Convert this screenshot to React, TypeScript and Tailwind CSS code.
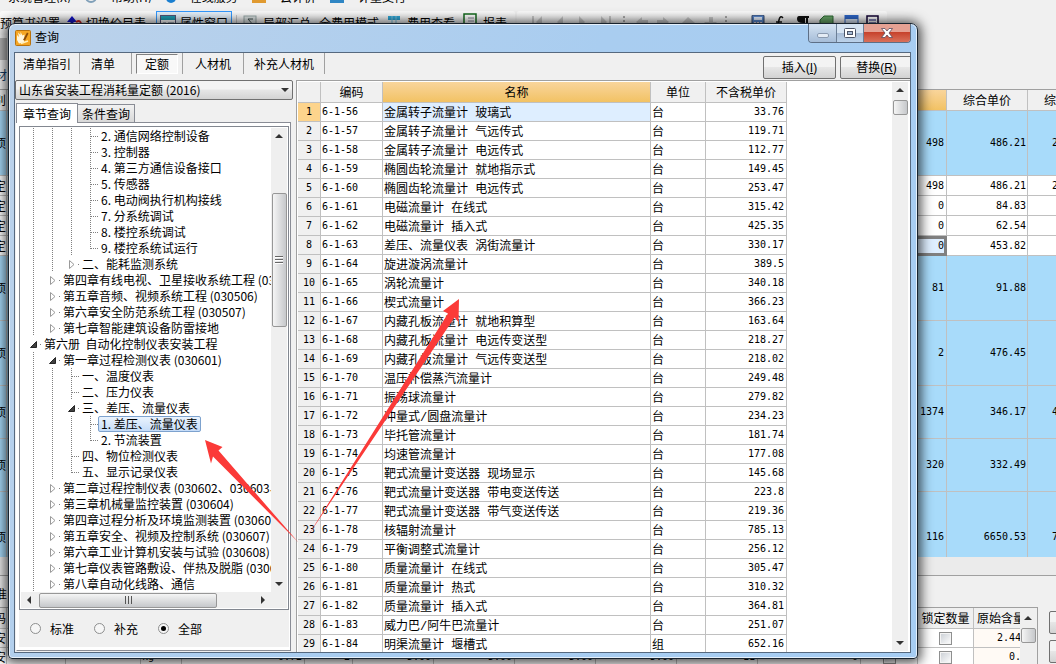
import { ReactNode } from 'react';
import clsx from 'clsx';

type Guide = '|' | 'T' | 'L' | '>' | 'v';

interface TreeNode {
  guides: Guide[];
  label: string;
  selected?: boolean;
}

const node = (guides: string, label: string, selected = false): TreeNode => ({
  guides: guides.split('') as Guide[],
  label,
  selected,
});

const treeNodes: TreeNode[] = [
  node('|||T', '2. 通信网络控制设备'),
  node('|||T', '3. 控制器'),
  node('|||T', '4. 第三方通信设备接口'),
  node('|||T', '5. 传感器'),
  node('|||T', '6. 电动阀执行机构接线'),
  node('|||T', '7. 分系统调试'),
  node('|||T', '8. 楼控系统调试'),
  node('|||L', '9. 楼控系统试运行'),
  node('||>', '二、能耗监测系统'),
  node('|>', '第四章有线电视、卫星接收系统工程 (030505)'),
  node('|>', '第五章音频、视频系统工程 (030506)'),
  node('|>', '第六章安全防范系统工程 (030507)'),
  node('|>', '第七章智能建筑设备防雷接地'),
  node('v', '第六册  自动化控制仪表安装工程'),
  node('|v', '第一章过程检测仪表 (030601)'),
  node('||T', '一、温度仪表'),
  node('||T', '二、压力仪表'),
  node('||v', '三、差压、流量仪表'),
  node('|||T', '1. 差压、流量仪表', true),
  node('|||L', '2. 节流装置'),
  node('||T', '四、物位检测仪表'),
  node('||L', '五、显示记录仪表'),
  node('|>', '第二章过程控制仪表 (030602、030603、030605)'),
  node('|>', '第三章机械量监控装置 (030604)'),
  node('|>', '第四章过程分析及环境监测装置 (030605)'),
  node('|>', '第五章安全、视频及控制系统 (030607)'),
  node('|>', '第六章工业计算机安装与试验 (030608)'),
  node('|>', '第七章仪表管路敷设、伴热及脱脂 (030609)'),
  node('|>', '第八章自动化线路、通信'),
];

const quotas: [string, string, string, string][] = [
  ['6-1-56', '金属转子流量计 玻璃式', '台', '33.76'],
  ['6-1-57', '金属转子流量计 气远传式', '台', '119.71'],
  ['6-1-58', '金属转子流量计 电远传式', '台', '112.77'],
  ['6-1-59', '椭圆齿轮流量计 就地指示式', '台', '149.45'],
  ['6-1-60', '椭圆齿轮流量计 电远传式', '台', '253.47'],
  ['6-1-61', '电磁流量计 在线式', '台', '315.42'],
  ['6-1-62', '电磁流量计 插入式', '台', '425.35'],
  ['6-1-63', '差压、流量仪表 涡街流量计', '台', '330.17'],
  ['6-1-64', '旋进漩涡流量计', '台', '389.5'],
  ['6-1-65', '涡轮流量计', '台', '340.18'],
  ['6-1-66', '楔式流量计', '台', '366.23'],
  ['6-1-67', '内藏孔板流量计 就地积算型', '台', '163.64'],
  ['6-1-68', '内藏孔板流量计 电远传变送型', '台', '218.27'],
  ['6-1-69', '内藏孔板流量计 气远传变送型', '台', '218.02'],
  ['6-1-70', '温压补偿蒸汽流量计', '台', '249.48'],
  ['6-1-71', '振荡球流量计', '台', '279.82'],
  ['6-1-72', '冲量式/圆盘流量计', '台', '234.23'],
  ['6-1-73', '毕托管流量计', '台', '181.74'],
  ['6-1-74', '均速管流量计', '台', '177.08'],
  ['6-1-75', '靶式流量计变送器 现场显示', '台', '145.68'],
  ['6-1-76', '靶式流量计变送器 带电变送传送', '台', '223.8'],
  ['6-1-77', '靶式流量计变送器 带气变送传送', '台', '219.36'],
  ['6-1-78', '核辐射流量计', '台', '785.13'],
  ['6-1-79', '平衡调整式流量计', '台', '256.12'],
  ['6-1-80', '质量流量计 在线式', '台', '305.47'],
  ['6-1-81', '质量流量计 热式', '台', '310.32'],
  ['6-1-82', '质量流量计 插入式', '台', '364.81'],
  ['6-1-83', '威力巴/阿牛巴流量计', '台', '251.07'],
  ['6-1-84', '明渠流量计 堰槽式', '组', '652.16'],
];

interface BillRow {
  kind: string;
  qty: string;
  price: string;
  total: string;
  height: string;
  item?: boolean;
  active?: boolean;
}

const billRows: BillRow[] = [
  { kind: '项', qty: '498', price: '486.21', total: '242132.58', height: 'h-[65px]', item: true },
  { kind: '定', qty: '498', price: '486.21', total: '242132.58', height: 'h-5' },
  { kind: '定', qty: '0', price: '84.83', total: '', height: 'h-5' },
  { kind: '定', qty: '0', price: '62.54', total: '', height: 'h-5' },
  { kind: '定', qty: '0', price: '453.82', total: '', height: 'h-5', active: true },
  { kind: '项', qty: '81', price: '91.88', total: '', height: 'h-[65px]', item: true },
  { kind: '项', qty: '2', price: '476.45', total: '', height: 'h-[65px]', item: true },
  { kind: '项', qty: '1374', price: '346.17', total: '475637.58', height: 'h-[53px]', item: true },
  { kind: '项', qty: '320', price: '332.49', total: '', height: 'h-[53px]', item: true },
  { kind: '项', qty: '116', price: '6650.53', total: '771461.48', height: 'h-[90px]', item: true },
];

const glossy = 'bg-linear-to-b from-[#f3f3f3] from-45% via-[#e6e6e6] via-50% to-[#d3d3d3]';
const digits = "font-['DejaVu_Sans_Mono',monospace] text-[10px]";

function Triangle({ dir, className }: { dir: 'up' | 'down' | 'left' | 'right'; className?: string }) {
  const points = {
    up: '0,6 4,2 8,6',
    down: '0,2 8,2 4,6',
    left: '6,0 2,4 6,8',
    right: '2,0 6,4 2,8',
  };
  return (
    <svg viewBox="0 0 8 8" className={clsx('size-2 shrink-0', className)}>
      <polygon points={points[dir]} fill="#333" />
    </svg>
  );
}

function GuideCell({ guide }: { guide: Guide }) {
  return (
    <span className="flex h-4 w-[19px] shrink-0 items-center">
      <svg viewBox="0 0 19 16" className="h-4 w-[19px]" shapeRendering="crispEdges">
        {(guide === '|' || guide === 'T') && (
          <path d="M9.5 0V16" stroke="#808080" strokeDasharray="1 1" />
        )}
        {guide === 'L' && <path d="M9.5 0V9" stroke="#808080" strokeDasharray="1 1" />}
        {(guide === 'T' || guide === 'L') && (
          <path d="M10 8.5H18" stroke="#808080" strokeDasharray="1 1" />
        )}
        {guide === '>' && (
          <g shapeRendering="auto">
            <path d="M7.5 4.5V12.5L12 8.5Z" fill="#fff" stroke="#9a9a9a" />
            <path d="M16 8.5H17" stroke="#808080" />
          </g>
        )}
        {guide === 'v' && (
          <g shapeRendering="auto">
            <path d="M12.5 5.5V11.5H6.5Z" fill="#404040" stroke="#262626" />
            <path d="M16 8.5H17" stroke="#808080" />
          </g>
        )}
      </svg>
    </span>
  );
}

function ChapterTree() {
  return (
    <div className="flex min-h-0 flex-1 flex-col border border-[#828790] bg-white p-px">
      <div className="flex min-h-0 flex-1">
        <ul role="tree" className="min-w-0 flex-1 overflow-hidden pl-[3px]">
          {treeNodes.map((item, i) => (
            <li key={i} role="treeitem" aria-selected={item.selected} className="flex h-4 items-center">
              {item.guides.map((guide, g) => (
                <GuideCell key={g} guide={guide} />
              ))}
              <span
                className={clsx(
                  'h-4 whitespace-pre',
                  item.selected
                    ? '-ml-0.5 rounded-xs border border-[#7da2ce] bg-linear-to-b from-[#eaf3fd] to-[#c5dcf8] px-0.5 leading-[14px]'
                    : 'pl-px leading-4',
                )}
              >
                {item.label}
              </span>
            </li>
          ))}
        </ul>
        <div className="flex w-4 shrink-0 flex-col items-center bg-[#efefef] py-1">
          <Triangle dir="up" />
          <div className="mt-[53px] flex h-[134px] w-[15px] shrink-0 flex-col items-center justify-center gap-px rounded-xs border border-[#979797] bg-linear-to-r from-[#f5f5f5] to-[#c6c8cb]">
            <i className="h-0.5 w-2 border-b border-white bg-[#666]" />
            <i className="h-0.5 w-2 border-b border-white bg-[#666]" />
            <i className="h-0.5 w-2 border-b border-white bg-[#666]" />
          </div>
          <Triangle dir="down" className="mt-auto" />
        </div>
      </div>
      <div className="flex h-4 items-center bg-[#efefef] pl-1">
        <Triangle dir="left" />
        <div className="ml-1.5 flex h-[15px] w-[178px] items-center justify-center gap-0.5 rounded-xs border border-[#979797] bg-linear-to-b from-[#f5f5f5] to-[#c6c8cb]">
          <i className="h-2 w-px bg-[#555]" />
          <i className="h-2 w-px bg-[#555]" />
          <i className="h-2 w-px bg-[#555]" />
        </div>
        <Triangle dir="right" className="ml-auto mr-5" />
      </div>
    </div>
  );
}

function QuotaTable() {
  const head = 'border-b border-r border-[#c0c0c0] bg-[#f0f0f0] font-normal';
  const cell = 'border-b border-r border-[#c0c0c0]';
  return (
    <table className="w-[489px] table-fixed border-separate border-spacing-0 leading-none">
      <colgroup>
        <col className="w-[23px]" />
        <col className="w-[62px]" />
        <col className="w-[268px]" />
        <col className="w-[55px]" />
        <col className="w-[81px]" />
      </colgroup>
      <thead>
        <tr className="h-[21px]">
          <th className={head} />
          <th className={head}>编码</th>
          <th className="border-b border-r border-[#c0c0c0] bg-linear-to-b from-[#f9d59b] to-[#f2c263] font-normal">
            名称
          </th>
          <th className={head}>单位</th>
          <th className={head}>不含税单价</th>
        </tr>
      </thead>
      <tbody>
        {quotas.map(([code, name, unit, price], i) => (
          <tr key={code} className="h-[19px]">
            <td className={clsx(cell, digits, 'text-center', i === 0 ? 'bg-[#fdd48c]' : 'bg-[#f0f0f0]')}>
              {i + 1}
            </td>
            <td className={clsx(cell, digits, 'pl-px')}>{code}</td>
            <td
              className={clsx(
                cell,
                "whitespace-nowrap pl-px pt-[3px] font-['Liberation_Mono','Noto_Sans_CJK_SC',monospace]",
                i === 0 && 'bg-[#deeeff]',
              )}
            >
              {name}
            </td>
            <td className={clsx(cell, 'pl-px')}>{unit}</td>
            <td className={clsx(cell, digits, 'pr-0.5 text-right')}>{price}</td>
          </tr>
        ))}
      </tbody>
    </table>
  );
}

function ToolTab({ children, active }: { children: ReactNode; active?: boolean }) {
  return (
    <div className="flex h-[21px] items-center border-r border-[#a0a0a0] px-1">
      <button
        className={clsx(
          'h-5 whitespace-nowrap',
          active
            ? 'border border-white border-l-[#808080] border-t-[#808080] bg-[#f8f8f8] px-2 pt-px'
            : 'px-1',
        )}
      >
        {children}
      </button>
    </div>
  );
}

function TitleBar() {
  return (
    <div className="flex h-7 shrink-0 items-start pl-px">
      <svg viewBox="0 0 16 16" className="mt-1.5 size-4">
        <rect x=".5" y=".5" width="15" height="15" rx="1" fill="#f5a623" stroke="#b8720f" />
        <path d="M2 5 4 7 3 2.500 5.500 5 5.500 2 7.500 5.500 9.500 4.500 9 12.500 4 13.500 2 10Z" fill="#fff6dc" />
        <path d="M8 10 12 2.500 13.500 3.500 10 10.500Z" fill="#8a4b08" />
        <path d="M6 13.500 13 11" stroke="#fff0c0" strokeWidth="1.500" />
      </svg>
      <h1 className="ml-1 mt-[5px] leading-4">查询</h1>
      <div className="ml-auto flex h-[19px] overflow-hidden rounded-b border border-t-0 border-[#5d6f86]">
        <button
          aria-label="最小化"
          className="flex w-7 items-end justify-center border-r border-[#6c7f96] bg-linear-to-b from-[#d5e3f2] to-[#a6bdd8] pb-1"
        >
          <span className="h-[5px] w-3 rounded-xs border border-[#8b9bb0] bg-[#e4ecf5]" />
        </button>
        <button
          aria-label="最大化"
          className="flex w-[27px] items-center justify-center border-r border-[#6c7f96] bg-linear-to-b from-[#d5e3f2] from-50% via-[#a7bcd6] via-50% to-[#bcd2ea]"
        >
          <svg viewBox="0 0 12 10" className="h-2.5 w-3">
            <rect x=".5" y=".5" width="11" height="9" rx="1" fill="#fff" stroke="#4c5568" />
            <rect x="3.5" y="3.5" width="5" height="3" fill="#a7bcd6" stroke="#4c5568" />
          </svg>
        </button>
        <button
          aria-label="关闭"
          className="flex w-[46px] items-center justify-center bg-linear-to-b from-[#e5a193] from-45% via-[#c6402a] via-45% to-[#d9705a]"
        >
          <svg viewBox="0 0 12 10" className="h-2.5 w-3">
            <path
              d="M.5.5H4L6 3 8 .5H11.5L8 5 11.5 9.5H8L6 7 4 9.5H.5L4 5Z"
              fill="#fff"
              stroke="#5a4a5c"
              strokeWidth=".8"
            />
          </svg>
        </button>
      </div>
    </div>
  );
}

function ActionButton({ label, accessKey }: { label: string; accessKey: string }) {
  return (
    <button
      accessKey={accessKey}
      className={clsx('h-[23px] w-[73px] shrink-0 rounded-xs border border-[#707070]', glossy)}
    >
      {label}
      <span className="font-['Liberation_Sans',sans-serif]">
        (<u>{accessKey}</u>)
      </span>
    </button>
  );
}

function QueryDialog() {
  return (
    <section
      aria-label="查询"
      className="absolute bottom-[5px] left-2 right-[138px] top-[23px] flex flex-col rounded-t-[7px] rounded-b-sm border border-[#18232e] bg-linear-115 from-[#bcd2ea] via-[#a9cdf0] to-[#a6cdf3] pb-[5px] pl-[5px] pr-1.5 shadow-[0_1px_12px_3px_rgba(0,0,0,0.7),inset_0_0_0_1px_rgba(255,255,255,0.7)]"
    >
      <TitleBar />
      <div className="flex min-h-0 flex-1 flex-col overflow-hidden border border-[#56697f] bg-[#f0f0f0]">
        <div className="flex h-[27px] shrink-0">
          <ToolTab>清单指引</ToolTab>
          <ToolTab>
            <span className="pl-[3px] pr-2">清单</span>
          </ToolTab>
          <ToolTab active>定额</ToolTab>
          <ToolTab>
            <span className="px-1">人材机</span>
          </ToolTab>
          <ToolTab>
            <span className="px-0.5">补充人材机</span>
          </ToolTab>
          <div className="-mr-[3px] ml-auto flex gap-1 pt-[3px]">
            <ActionButton label="插入" accessKey="I" />
            <ActionButton label="替换" accessKey="R" />
          </div>
        </div>

        <div className="flex min-h-0 flex-1">
          <div className="flex w-[281px] shrink-0 flex-col pb-px">
            <div className="relative w-[278px]">
              <select
                aria-label="定额库"
                className={clsx(
                  'h-5 w-full appearance-none rounded-xs border border-[#707070] pl-[3px] leading-[18px]',
                  glossy,
                )}
              >
                <option>山东省安装工程消耗量定额 (2016)</option>
              </select>
              <Triangle dir="down" className="pointer-events-none absolute right-1 top-1.5" />
            </div>

            <div role="tablist" className="flex items-end pl-px pt-[3px]">
              <button
                role="tab"
                aria-selected="true"
                className="relative -mb-px h-5 w-[62px] border border-b-0 border-[#898c95] bg-white"
              >
                章节查询
              </button>
              <button
                role="tab"
                aria-selected="false"
                className="h-[18px] w-[57px] border border-b-0 border-l-0 border-[#898c95] bg-linear-to-b from-[#f2f2f2] to-[#d8d8d8]"
              >
                条件查询
              </button>
            </div>
            <div className="ml-px mr-[5px] flex min-h-0 flex-1 flex-col border border-[#898c95] border-l-white bg-white py-[3px] pl-0.5 pr-px">
              <ChapterTree />
              <div className="flex h-[37px] shrink-0 items-center gap-5 bg-[#f0f0f0] pl-[11px]">
                {['标准', '补充', '全部'].map((name) => (
                  <label key={name} className="flex items-center gap-[9px] leading-4">
                    <input
                      type="radio"
                      name="scope"
                      defaultChecked={name === '全部'}
                      className="flex size-[11px] appearance-none items-center justify-center rounded-full border border-[#8e8f8f] bg-[#f6f6f6] checked:before:size-[5px] checked:before:rounded-full checked:before:bg-black"
                    />
                    {name}
                  </label>
                ))}
              </div>
            </div>
          </div>

          <div className="flex min-w-0 flex-1 border-l border-t border-[#a0a0a0] bg-white pl-px pr-0.5 pt-px">
            <div className="min-w-0 flex-1 overflow-hidden">
              <QuotaTable />
            </div>
            <div className="mb-px flex w-4 shrink-0 flex-col items-center bg-[#efefef] py-1">
              <Triangle dir="up" />
              <div className="mt-1.5 h-[15px] w-[15px] shrink-0 rounded-xs border border-[#979797] bg-linear-to-r from-[#f5f5f5] to-[#c6c8cb]" />
              <Triangle dir="down" className="mt-auto" />
            </div>
          </div>
        </div>
      </div>
    </section>
  );
}

function MenuRow() {
  return (
    <nav className="flex h-[3px] shrink-0 items-end gap-3.5 overflow-hidden whitespace-nowrap pl-2 leading-3">
      <a href="#system">系统管理(X)</a>
      <i className="size-3 shrink-0 rounded-full border-2 border-[#7f9fb8]" />
      <a href="#help">帮助(H)</a>
      <i className="size-2.5 shrink-0 rounded-full bg-[#1a7fd0]" />
      <a href="#service">在线服务</a>
      <i className="size-3.5 shrink-0 bg-[#e09a30]" />
      <a href="#cloud">云计价</a>
      <i className="size-3.5 shrink-0 bg-[#2f86c4]" />
      <a href="#query">计量支付</a>
    </nav>
  );
}

function MainToolbar() {
  return (
    <div className="mt-[7px] flex h-6 shrink-0 items-start whitespace-nowrap pt-px">
      <div className="flex rounded-xs bg-linear-to-b from-[#fafafa] to-[#ececec] pr-2">
        <button className="h-6">预算书设置</button>
        <svg viewBox="0 0 16 16" className="ml-1.5 mt-1 size-4">
          <path d="M4.500 14V7H1L6 1 11 7H7.500V14Z" fill="#1414c8" />
          <path d="M10 7Q15 4 15 10" fill="none" stroke="#c22" strokeWidth="2" />
        </svg>
        <button className="ml-1 h-6">切换价目表</button>
        <button className="ml-2.5 flex h-6 items-center gap-1 border border-[#3399ff] bg-[#e5f1fb] px-[3px]">
          <svg viewBox="0 0 16 16" className="size-4">
            <rect x=".5" y=".5" width="15" height="14" fill="#fff" stroke="#557" />
            <rect x="1" y="1" width="14" height="4" fill="#1f9fb5" />
            <path d="M3 8H6M8 8H14M3 11H6M8 11H14" stroke="#678" />
          </svg>
          属性窗口
        </button>
        <span className="ml-1 mt-1 h-5 w-px bg-[#c8c8c8]" />
        <svg viewBox="0 0 16 16" className="ml-1.5 mt-1 size-4">
          <rect x="1" y="1" width="12" height="13" fill="#dfe6e6" stroke="#9aa" />
          <path d="M10 4H5L8 7.5 5 11H10" fill="none" stroke="#455" />
        </svg>
        <button className="ml-1 h-6">局部汇总</button>
        <button className="ml-2 h-6">全费用模式</button>
        <svg viewBox="0 0 16 16" className="ml-2 mt-1 size-4">
          <rect x="1" y="1" width="12" height="13" fill="#eef6fa" />
          <rect x="1" y="1" width="12" height="4" fill="#2fa8d8" />
          <path d="M1 8.5H13M1 11.5H13M5 1V14M9 1V14" stroke="#7cc4e0" />
        </svg>
        <button className="ml-1 h-6">费用查看</button>
        <svg viewBox="0 0 16 16" className="ml-2 mt-0.5 size-4">
          <rect x="1" y="1" width="12" height="14" fill="#fff" stroke="#12691c" strokeWidth="1.5" />
          <path d="M5 5H11M5 8H11M5 11H11" stroke="#889" />
        </svg>
        <button className="ml-1 h-6">报表</button>
      </div>
      <div className="ml-0.5 flex h-6 rounded-xs bg-linear-to-b from-[#fafafa] to-[#ececec] pl-3.5 pt-1">
        <svg viewBox="0 0 220 16" className="h-4 w-[220px]" fill="#c9c9c9">
          <path d="M1 1V13H3V1ZM11 1 5 7 11 13ZM32 1 26 7 32 13ZM48 1 54 7 48 13ZM70 1 76 7 70 13ZM78 1V13H80V1ZM105 7 111 2V5H117V9H111V12ZM138 7 132 2V5H126V9H132V12ZM157 2 164 8H160V13H155V8H151ZM180 13 173 7H178V2H182V7H186Z" />
          <path d="M93 1V14" stroke="#aaa" strokeWidth="2" strokeDasharray="2 2" />
          <path d="M195 1V14" stroke="#aaa" strokeWidth="2" strokeDasharray="2 2" />
        </svg>
        <svg viewBox="0 0 136 16" className="h-4 w-[136px]">
          <rect x="1" y="0" width="12" height="15" rx="1" fill="#5b8ad0" stroke="#346" />
          <rect x="3" y="2" width="8" height="3" fill="#e6f0ff" />
          <path d="M3 8H11M3 11H11" stroke="#f3e0e0" strokeWidth="2" strokeDasharray="2 1" />
          <path d="M32 3Q29 0 28 5L26 14M25 7H31M30 9 35 14M35 9 30 14" fill="none" stroke="#111" strokeWidth="1.5" />
          <path d="M48 1H58V3H57V14H55V3H54V14H52V8Q46 8 46 4Q46 1 48 1Z" fill="#111" />
          <path d="M69 5 73 1H82V10L79 14H69Z" fill="#69a869" stroke="#2e6a35" />
          <rect x="94" y=".5" width="13" height="14" fill="#dce9fb" stroke="#2e66c8" />
          <rect x="94" y="0" width="13" height="4" fill="#2e66c8" />
          <rect x="116" y="1" width="11" height="13" fill="#fff" stroke="#103" strokeWidth="1.500" />
          <path d="M118 5H125M118 8H125M118 11H125" stroke="#117" />
        </svg>
      </div>
    </div>
  );
}

function BillTable() {
  const cell = 'border-b border-r border-[#c0c0c0]';
  return (
    <div className="h-[468px] shrink-0 overflow-hidden border-t border-[#a0a0a0]">
      <table className="w-full table-fixed border-separate border-spacing-0 leading-none">
        <colgroup>
          <col className="w-[7px]" />
          <col />
          <col className="w-[81px]" />
          <col className="w-[81px]" />
          <col className="w-7" />
        </colgroup>
        <thead>
          <tr className="h-[21px] bg-[#f0f0f0]">
            <th className={clsx(cell, 'overflow-hidden font-normal')}>
              <div className="flex justify-end">别</div>
            </th>
            <th className={cell} />
            <th className={clsx(cell, 'bg-linear-to-b from-[#f9d59b] to-[#f2c263]')} />
            <th className={clsx(cell, 'font-normal')}>综合单价</th>
            <th className="overflow-hidden whitespace-nowrap border-b border-[#c0c0c0] pl-4 text-left font-normal">
              综合合价
            </th>
          </tr>
        </thead>
        <tbody>
          {billRows.map((row, i) => (
            <tr key={i} className={clsx(row.height, row.item ? 'bg-[#a8dbfa]' : 'bg-white')}>
              <td className={clsx(cell, 'overflow-hidden')}>
                <div className="flex justify-end">{row.kind}</div>
              </td>
              <td className={cell} />
              <td
                className={clsx(
                  digits,
                  'text-right',
                  row.active ? 'border-[3px] border-[#808080] bg-[#deeeff]' : clsx(cell, 'pr-0.5'),
                )}
              >
                {row.qty}
              </td>
              <td className={clsx(cell, digits, 'pr-px text-right')}>{row.price}</td>
              <td className={clsx('overflow-hidden border-b border-[#c0c0c0] pl-6', digits)}>{row.total}</td>
            </tr>
          ))}
        </tbody>
      </table>
    </div>
  );
}

function MaterialTable() {
  const cell = 'border-b border-r border-[#c0c0c0]';
  const rows = [
    { unit: 'kg', values: ['0.42', '2', '5.00', '5.00', '5.00', '5.00', '11', '0'], amount: '2.44', pad: 'pl-[23px]' },
    { unit: 'kg', values: ['0.72', '2', '5.00', '5.00', '5.00', '5.00', '11', '0'], amount: '0.2', pad: 'pl-[35px]' },
  ];
  return (
    <div className="flex h-[57px] shrink-0">
      <div className="flex min-w-0 flex-1 border-r border-t border-[#a0a0a0] bg-[#f0f0f0] pr-px">
        <table className="w-full min-w-0 flex-1 table-fixed border-separate border-spacing-0 leading-none">
          <colgroup>
            <col className="w-[7px]" />
            <col className="w-[59px]" />
            <col className="w-[75px]" />
            <col className="w-[41px]" />
            <col className="w-[123px]" />
            <col className="w-12" />
            <col className="w-[81px]" />
            <col className="w-[81px]" />
            <col className="w-[81px]" />
            <col className="w-[81px]" />
            <col className="w-[81px]" />
            <col />
            <col className="w-[57px]" />
            <col className="w-[56px]" />
            <col className="w-[46px]" />
          </colgroup>
          <thead>
            <tr className="h-[21px]">
              <th className={clsx(cell, 'overflow-hidden font-normal')}>
                <div className="flex justify-end">码</div>
              </th>
              {Array.from({ length: 12 }, (_, i) => (
                <th key={i} className={cell} />
              ))}
              <th className={clsx(cell, 'whitespace-nowrap font-normal')}>锁定数量</th>
              <th className="overflow-hidden whitespace-nowrap border-b border-[#c0c0c0] pl-[3px] text-left font-normal">
                原始含量
              </th>
            </tr>
          </thead>
          <tbody>
            {rows.map((row, i) => (
              <tr key={i} className="h-[19px] bg-white">
                <td className={clsx(cell, 'overflow-hidden')}>
                  <div className="flex justify-end">安</div>
                </td>
                <td className={cell} />
                <td className={cell} />
                <td className={clsx(cell, digits, 'pl-px')}>{row.unit}</td>
                {row.values.map((value, v) => (
                  <td key={v} className={clsx(cell, digits, 'pr-0.5 text-right')}>
                    {value}
                  </td>
                ))}
                {['暂估', '锁定数量'].map((name) => (
                  <td key={name} className={cell}>
                    <input
                      type="checkbox"
                      aria-label={name}
                      className="mx-auto block size-[13px] appearance-none border border-[#8e8f8f] bg-linear-135 from-[#c9ced4] to-white shadow-[inset_0_0_0_1px_#f4f4f4]"
                    />
                  </td>
                ))}
                <td className={clsx('overflow-hidden border-b border-[#c0c0c0] bg-[#fffaf5]', row.pad, digits)}>
                  {row.amount}
                </td>
              </tr>
            ))}
          </tbody>
        </table>
        <div className="flex w-4 shrink-0 flex-col items-center overflow-hidden bg-[#efefef] pt-1.5">
          <Triangle dir="up" />
          <div className="mt-1.5 h-[15px] w-[15px] shrink-0 rounded-xs border border-[#979797] bg-linear-to-r from-[#f5f5f5] to-[#c6c8cb]" />
        </div>
      </div>
      <div className="flex w-[18px] flex-col gap-1.5 overflow-hidden pl-[11px] pt-1">
        <button
          aria-label="上移"
          className={clsx('h-[23px] w-[73px] shrink-0 rounded-xs border border-[#707070]', glossy)}
        />
        <button
          aria-label="下移"
          className={clsx('h-[23px] w-[73px] shrink-0 rounded-xs border border-[#707070]', glossy)}
        />
      </div>
    </div>
  );
}

function Arrows() {
  return (
    <svg
      viewBox="200 290 270 260"
      className="pointer-events-none absolute left-[200px] top-[290px] h-[260px] w-[270px]"
      fill="#fb3a38"
    >
      <path d="M205 440 222.500 447 218.500 450.500 298.500 542.500 213 456.500 211 463.500Z" />
      <path d="M459 299 443 311 448 313.500 306.500 538 454.500 317.500 458.500 322Z" />
    </svg>
  );
}

export default function App() {
  return (
    <main className="relative flex h-screen flex-col overflow-hidden bg-[#f0f0f0] font-['Noto_Sans_CJK_SC',sans-serif] text-xs text-black">
      <MenuRow />
      <MainToolbar />
      <div className="mt-1 h-[22px] w-[7px] shrink-0 bg-[#b4b4b4]" />
      <div className="flex h-[29px] w-[7px] shrink-0 items-center justify-end overflow-hidden text-[#123a66]">材</div>
      <BillTable />
      <div className="h-[18px] shrink-0 bg-[#ebebeb]" />
      <div className="flex h-8 shrink-0 items-center border-t border-[#a0a0a0]">
        <div className="flex w-[7px] justify-end overflow-hidden pt-1">准</div>
      </div>
      <MaterialTable />
      <QueryDialog />
      <Arrows />
    </main>
  );
}
